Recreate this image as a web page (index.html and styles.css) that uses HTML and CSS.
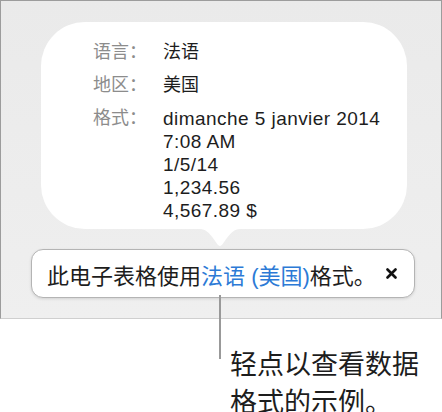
FILE: index.html
```html
<!DOCTYPE html>
<html>
<head>
    <meta charset="utf-8">
    <link rel="stylesheet" href="styles.css">
</head>
<body>

<!-- khung bảng tính -->
<div class="panel">
    <div class="bubble">
        <div class="row">
            <div class="label">语言：</div>
            <div class="value">法语</div>
        </div>
        <div class="row">
            <div class="label">地区：</div>
            <div class="value">美国</div>
        </div>
        <div class="row">
            <div class="label">格式：</div>
            <div class="value latin">
                <div>dimanche 5 janvier 2014</div>
                <div>7:08 AM</div>
                <div>1/5/14</div>
                <div>1,234.56</div>
                <div>4,567.89 $</div>
            </div>
        </div>
    </div>
    <svg class="pointer" width="40" height="18" viewBox="0 0 40 18">
        <path d="M0 0 C 11 0, 16 17, 20 17 C 24 17, 29 0, 40 0 Z" fill="#fff"/>
    </svg>
    <div class="toast">
        <span class="msg">此电子表格使用<span class="link">法语 (美国)</span>格式。</span>
        <svg class="close" width="11" height="11" viewBox="0 0 11 11">
            <path d="M1.5 1.5 L9.5 9.5 M9.5 1.5 L1.5 9.5" stroke="#111" stroke-width="2.6" stroke-linecap="round"/>
        </svg>
    </div>
</div>

<!-- chú thích -->
<div class="caption">
    <div class="leader"></div>
    轻点以查看数据<br>格式的示例。
</div>

</body>
</html>
```

FILE: styles.css
```css
body {
    margin: 0;
    background-color: #fff;
    font-family: "Liberation Sans", "Noto Sans CJK SC", sans-serif;
    color: #1d1d1d;
}
.panel {
    box-sizing: border-box;
    width: 442px;
    height: 319px;
    border: 1px solid #9c9c9c;
    border-bottom-color: #cfcfcf;
    background: linear-gradient(#eaeaea, #efefef);
    overflow: hidden;
}
.bubble {
    box-sizing: border-box;
    width: 366px;
    height: 207px;
    margin: 21px 0 0 40px;
    padding: 19px 0 0 52px;
    background-color: #fff;
    border-radius: 44px;
}
.row {
    display: flex;
    margin-bottom: 10px;
    line-height: 23px;
}
.label {
    width: 70px;
    font-size: 18px;
    color: #8c8c8c;
}
.value {
    font-size: 18px;
    color: #1d1d1d;
}
.latin {
    font-size: 19px;
    letter-spacing: 0.45px;
}
.pointer {
    display: block;
    margin-left: 199px;
}
.toast {
    box-sizing: border-box;
    width: 384px;
    height: 49px;
    margin: 2px 0 0 30px;
    padding: 0 17px 0 15px;
    display: flex;
    align-items: center;
    justify-content: space-between;
    background-color: #fff;
    border: 1px solid #b4b4b4;
    border-radius: 12px;
    box-shadow: 0 1px 3px rgba(0, 0, 0, 0.12);
    font-size: 22px;
    color: #1d1d1d;
}
.link {
    color: #2c7ad6;
}
.close {
    display: block;
}
.caption {
    position: relative;
    padding: 25px 0 0 230px;
    font-family: "Noto Sans CJK SC", sans-serif;
    font-size: 27px;
    line-height: 38px;
    color: #1d1d1d;
}
.leader {
    position: absolute;
    left: 219px;
    top: -24px;
    width: 2px;
    height: 64px;
    background-color: #999;
}
```
